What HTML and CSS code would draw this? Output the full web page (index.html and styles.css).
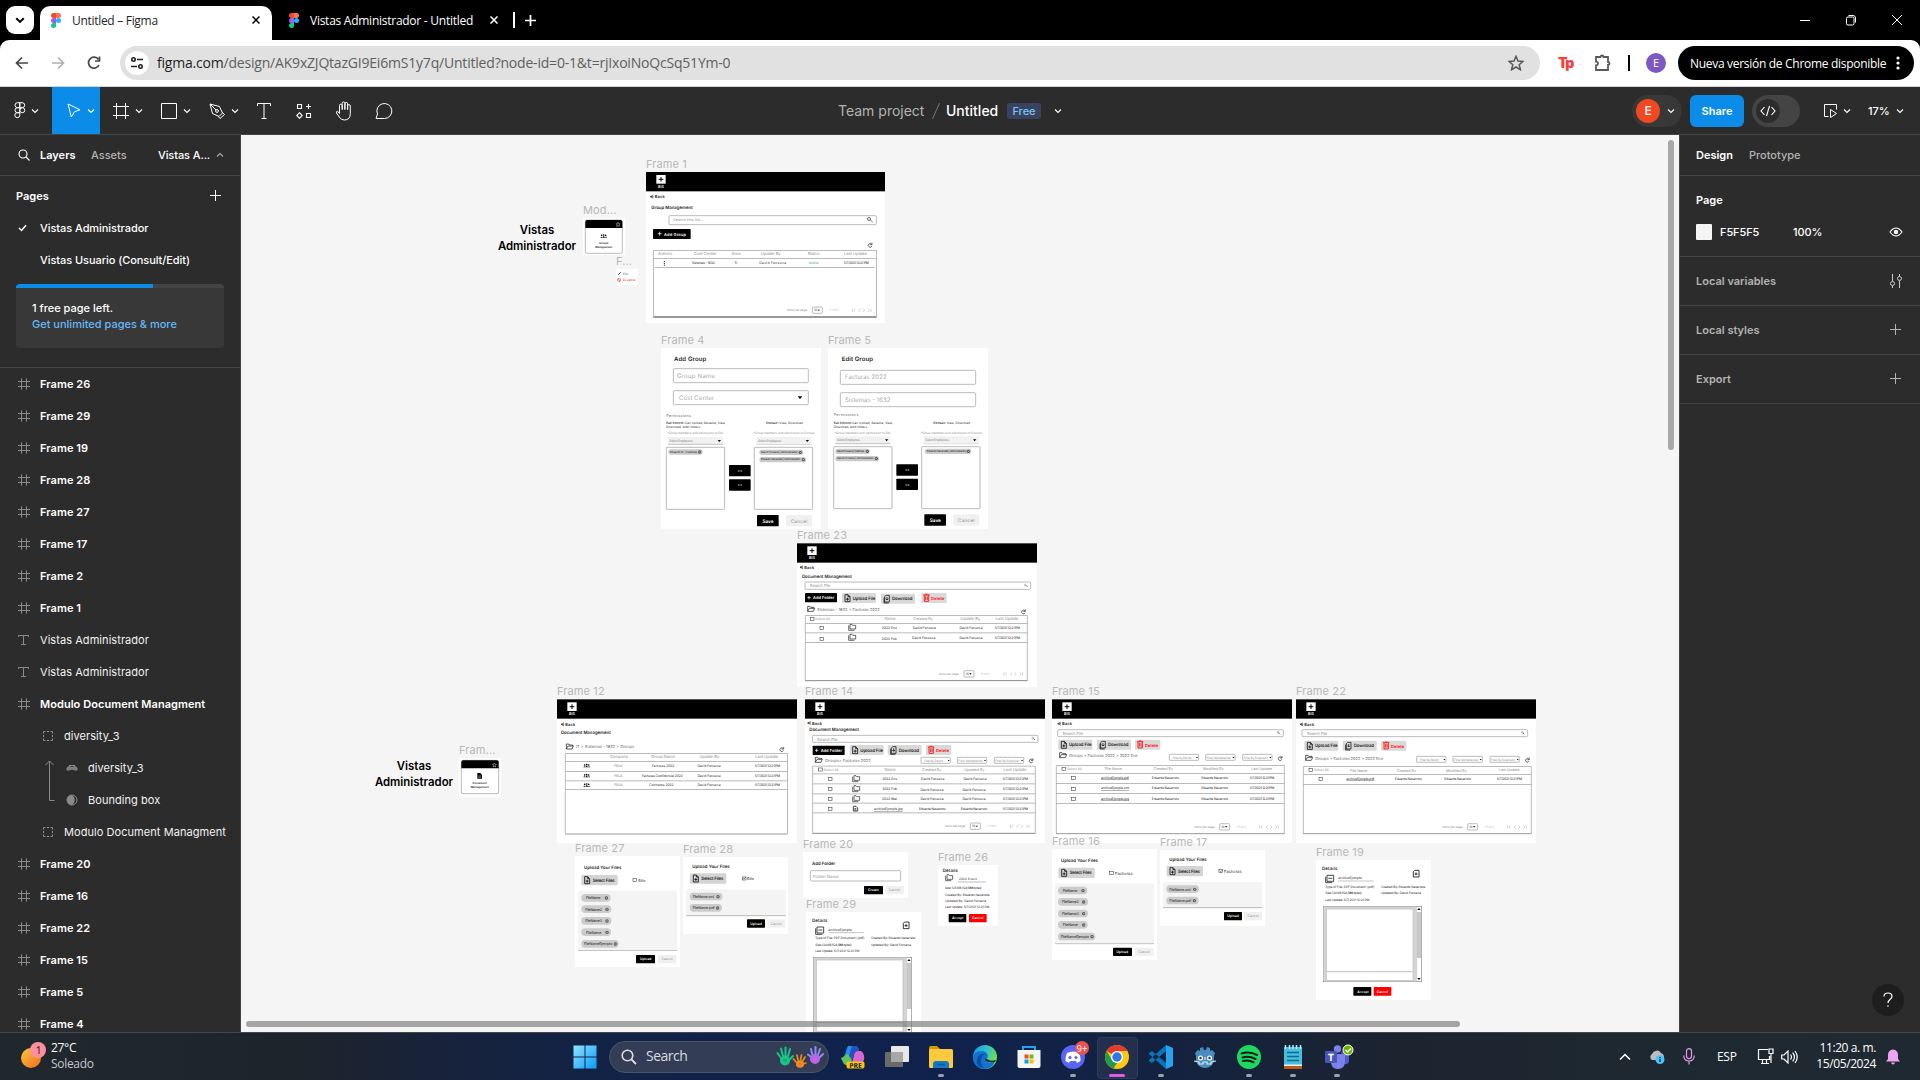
FILE: index.html
```html
<!DOCTYPE html>
<html lang="es">
<head>
<meta charset="utf-8">
<title>Untitled – Figma</title>
<link rel="stylesheet" href="styles.css">
</head>
<body>
<svg class="defs" aria-hidden="true">
  <defs>
    <symbol id="chev" viewBox="0 0 8 8"><path d="M1 2.5 4 5.5 7 2.5" fill="none" stroke="currentColor" stroke-width="1.1"/></symbol>
    <symbol id="plus" viewBox="0 0 12 12"><path d="M5.500 0v11M0 5.500h11" fill="none" stroke="currentColor"/></symbol>
    <symbol id="figma-logo" viewBox="0 0 10 15">
      <path d="M2.5 0H5v5H2.500a2.500 2.500 0 0 1 0-5z" fill="#f24e1e"/><path d="M5 0h2.500a2.500 2.500 0 0 1 0 5H5z" fill="#ff7262"/>
      <path d="M2.500 5H5v5H2.500a2.500 2.500 0 0 1 0-5z" fill="#a259ff"/><circle cx="7.500" cy="7.500" r="2.500" fill="#1abcfe"/>
      <path d="M2.500 10H5v2.500A2.500 2.500 0 1 1 2.500 10z" fill="#0acf83"/>
    </symbol>
    <symbol id="hash" viewBox="0 0 12 12"><path d="M3.500.5v11M8.500.5v11M0 3.500h12M0 8.500h12" fill="none" stroke="currentColor"/></symbol>
    <symbol id="tee" viewBox="0 0 12 12"><path d="M.5 3V1.500h10V3M5.500 1.500v9.500M3 10.500h5" fill="none" stroke="currentColor"/></symbol>
    <symbol id="group" viewBox="0 0 12 12"><path d="M1.500 3.500v-2h2M5 1.500h2M8.500 1.500h2v2M10.500 5v2M10.500 8.500v2h-2M7 10.500H5M3.500 10.500h-2v-2M1.500 7V5" fill="none" stroke="currentColor"/></symbol>

    <g id="scr-head">
      <rect width="720" height="58"/>
      <rect x="31" y="9" width="28" height="26" fill="#fff"/>
      <path d="M45 15v14M38 22h14" stroke="#000" stroke-width="3"/>
      <text x="45" y="44" class="c w b" font-size="11">BIS</text>
    </g>
    <g id="back"><path d="M11-4.500 2 0l9 4.500M2 0h10" fill="none" stroke="#222" stroke-width="2"/><text x="15" y="0" class="b" font-size="12" textLength="30">Back</text></g>
    <g id="refresh"><path d="M5-2A5.500 5.500 0 1 0 5.500 3M6-7v6H0" fill="none" stroke="#222" stroke-width="2"/></g>
    <g id="pager">
      <text x="0" y="0" class="g" font-size="9" textLength="62">Items per page:</text>
      <rect x="76" y="-10" width="30" height="19" rx="3" class="ln"/>
      <text x="81" y="0" font-size="9">10</text><path d="M92-2h7l-3.500 4z"/>
      <text x="127" y="0" class="l" font-size="9" textLength="27">1-1 of 1</text>
      <path d="M196-5V5M205-5l-5 5 5 5M220-5l-5 5 5 5M228-5l5 5-5 5M243-5l5 5-5 5M252-5V5" fill="none" stroke="#bbb" stroke-width="1.800"/>
    </g>
    <g id="file-add"><path d="M2 1h9l6 6v15H2zM11 1v6h6M9.500 10v9M5 14.500h9" fill="none" stroke="#111" stroke-width="2.500"/></g>
    <g id="folder"><path d="M1 16V1h7l2 3h10v3M1 16 6 7h16l-4 9z" fill="none" stroke="#222" stroke-width="2.200"/></g>
    <g id="folders"><path d="M5 1h6l2 3h9v11H5zM1 4v15h17" fill="none" stroke="#333" stroke-width="2.200"/></g>
    <g id="upload-btn"><rect width="102" height="30" rx="3" fill="#d9d9d9"/><use href="#file-add" x="7" y="4"/><text x="32" y="16" class="b" font-size="13" textLength="68">Upload File</text></g>
    <g id="down-btn"><rect width="102" height="30" rx="3" fill="#d9d9d9"/><path d="M15 5h10v20H11V9zM9 12v16h14M18 10v9M14 15l4 4 4-4" fill="none" stroke="#111" stroke-width="2.300"/><text x="33" y="16" class="b" font-size="13" textLength="61">Download</text></g>
    <g id="del-btn"><rect width="76" height="30" rx="3" fill="#d9d9d9"/><path d="M6 6h19M12 4h7M9 6v19h13V6M13 10v11M18 10v11" fill="none" stroke="#f00" stroke-width="2.500"/><text x="30" y="16" class="r b" font-size="12" textLength="39">Delete</text></g>
    <g id="add-btn"><rect width="96" height="28" rx="2"/><path d="M12 9v10M7 14h10" stroke="#fff" stroke-width="2.200"/><text x="24" y="14" class="w b" font-size="12" textLength="64">Add Folder</text></g>
    <rect id="box" x="-5" y="-5" width="11" height="9" fill="none" stroke="#444" stroke-width="1.800"/>
    <g id="x"><circle r="5" fill="#555"/><path d="M-2-2l4 4M2-2l-4 4" stroke="#ddd" stroke-width="1.500"/></g>
    <g id="people"><circle cx="-6" cy="-3" r="2.500"/><circle cy="-4" r="2.500"/><circle cx="6" cy="-3" r="2.500"/><path d="M-10 4q3-6 6 0zM-4 4q4-8 8 0zM4 4q3-6 6 0z"/></g>
    <g id="select-btn"><rect width="109" height="31" rx="4" fill="#d4d4d4"/><use href="#file-add" x="8" y="4"/><text x="34" y="16" class="b" font-size="13" textLength="66">Select Files</text></g>
    <g id="chips5">
      <rect width="88" height="23" rx="11" class="chip"/><text x="14" y="12" font-size="11" textLength="44">FileName</text><use href="#x" x="75" y="12"/>
      <rect y="34" width="90" height="23" rx="11" class="chip"/><text x="12" y="46" font-size="11" textLength="50">FileName2</text><use href="#x" x="77" y="46"/>
      <rect y="69" width="90" height="23" rx="11" class="chip"/><text x="12" y="81" font-size="11" textLength="50">FileName3</text><use href="#x" x="77" y="81"/>
      <rect y="103" width="89" height="23" rx="11" class="chip"/><text x="14" y="115" font-size="11" textLength="46">FileName</text><use href="#x" x="77" y="115"/>
      <rect y="138" width="112" height="23" rx="11" class="chip"/><text x="8" y="150" font-size="11" textLength="85">FileNameEjemplo</text><use href="#x" x="102" y="150"/>
    </g>
    <g id="chips2">
      <rect width="98" height="23" rx="11" class="chip"/><text x="9" y="12" font-size="11" textLength="64">FileName.xml</text><use href="#x" x="85" y="12"/>
      <rect y="34" width="97" height="23" rx="11" class="chip"/><text x="9" y="46" font-size="11" textLength="66">FileName.pdf</text><use href="#x" x="84" y="46"/>
    </g>
    <g id="filters">
      <rect width="88" height="18" rx="2" class="ln"/><text x="10" y="10" class="g" font-size="9" textLength="56">Filter by Period</text><path d="M80 8h6l-3 4z"/>
      <rect x="109" width="88" height="18" rx="2" class="ln"/><text x="112" y="10" class="g" font-size="9" textLength="72">Filter Alphabetical</text><path d="M189 8h6l-3 4z"/>
      <rect x="220" width="88" height="18" rx="2" class="ln"/><text x="223" y="10" class="g" font-size="9" textLength="72">Filter By Extension</text><path d="M300 8h6l-3 4z"/>
    </g>
    <g id="preview-win">
      <rect x="1" y="1" width="295" height="226" fill="#fff" stroke="#888" stroke-width="2"/>
      <path d="M2 2h278v224H2zM11 9v214h259V9z" fill="#d4d4d4" fill-rule="evenodd"/><rect x="11" y="9" width="259" height="214" fill="#fff" stroke="#bbb" stroke-width="2"/>
      <path d="M11 197h259" stroke="#ccc" stroke-width="4"/>
      <rect x="282" y="18" width="12" height="138" fill="#c8c8c8"/><path d="M283 12h10l-5-6zM283 216h10l-5 6z"/><path d="M281 0v226" stroke="#bbb" stroke-width="2"/>
    </g>
    <g id="doc-info">
      <text x="18" y="25" class="b" font-size="13" textLength="46">Details</text>
      <path d="M33 45h20v18H33zM29 49v18h20M37 54h12" fill="none" stroke="#222" stroke-width="2.500"/>
      <text x="67" y="54" font-size="10" textLength="70">archivoEjemplo</text><path d="M67 62h106" stroke="#888" stroke-width="1.500"/>
      <path d="M296 30h13v20h-17V34zM300 36v9M296 41h9" fill="none" stroke="#111" stroke-width="2.500"/>
      <text x="28" y="79" font-size="9.500" textLength="147">Type of File: PDF Document (.pdf)</text>
      <text x="28" y="99" font-size="9.500" textLength="109">Size: 124 KB (124,588 bytes)</text>
      <text x="28" y="118" font-size="9.500" textLength="132">Last Update: 5/7/2021 12:21 PM</text>
      <text x="195" y="79" font-size="9.500" textLength="133">Created By: Eduardo Navarrete</text>
      <text x="195" y="99" font-size="9.500" textLength="120">Updated By: David Fonseca</text>
    </g>
    <g id="perm">
      <text x="0" y="0" class="m" font-size="11" textLength="74">Permissions</text>
      <text x="0" y="23" class="b" font-size="9" textLength="54">Full Control:</text><text x="56" y="23" font-size="9" textLength="122">Can Upload, Rename, View,</text>
      <text x="0" y="36" font-size="9" textLength="103">Download, Add folders.</text>
      <text x="299" y="23" class="b" font-size="9" textLength="37">Consult:</text><text x="339" y="23" font-size="9" textLength="73">View, Download.</text>
      <text x="3" y="53" class="g" font-size="9" textLength="168">*Group members with permission to Edit</text>
      <text x="261" y="53" class="g" font-size="9" textLength="184">*Group members with permission to Consult</text>
      <rect x="5" y="64" width="165" height="22" fill="#f1f1f1"/><path d="M5 86h165M270 86h165" stroke="#aaa" stroke-width="2"/>
      <rect x="270" y="64" width="165" height="22" fill="#f1f1f1"/>
      <text x="9" y="75" class="g" font-size="10" textLength="70">Select Employees</text><text x="275" y="75" class="g" font-size="10" textLength="70">Select Employees</text>
      <path d="M154 73h10l-5 6zM418 73h10l-5 6z"/>
      <rect x="0" y="95" width="175" height="186" rx="2" class="ln"/><rect x="264" y="95" width="175" height="186" rx="2" class="ln"/>
      <rect x="188" y="148" width="65" height="34" rx="2"/><rect x="188" y="191" width="65" height="34" rx="2"/>
      <text x="221" y="165" class="c w" font-size="11">&gt;&gt;</text><text x="221" y="208" class="c w" font-size="11">&lt;&lt;</text>
      <rect x="272" y="298" width="65" height="34" rx="2"/><text x="305" y="316" class="c w b" font-size="14">Save</text>
      <rect x="359" y="298" width="78" height="34" fill="#f0f0f0"/><text x="398" y="316" class="c g" font-size="14" textLength="50">Cancel</text>
    </g>
  </defs>
</svg>

<div class="desktop">
  <header class="tabs">
    <button class="tab-search"><svg width="12" height="12" viewBox="0 0 8 8"><path d="M1.500 2.800 4 5.300 6.500 2.800" fill="none" stroke="#000" stroke-width="1.300"/></svg></button>
    <div class="tab tab-on"><svg width="10" height="15"><use href="#figma-logo"/></svg><span class="tt1">Untitled – Figma</span><svg class="tx" width="8" height="8"><path d="M.5.5l7 7M7.500.5l-7 7" stroke="#000" stroke-width="1.500"/></svg></div>
    <div class="tab tab-off"><svg width="10" height="15"><use href="#figma-logo"/></svg><span class="tt2">Vistas Administrador - Untitled</span><svg class="tx" width="8" height="8"><path d="M.5.5l7 7M7.500.5l-7 7" stroke="#fff" stroke-width="1.500"/></svg></div>
    <i class="tab-bar"></i>
    <svg class="newtab" width="11" height="11"><path d="M5.500 0v11M0 5.500h11" stroke="#fff" stroke-width="1.700"/></svg>
    <div class="winctl">
      <svg width="10" height="12"><path d="M0 6.500h10" stroke="#fff"/></svg>
      <svg width="10" height="12"><path d="M.5 4.500a1.500 1.500 0 0 1 1.500-1.500h4.500a1.500 1.500 0 0 1 1.500 1.500v5a1.500 1.500 0 0 1-1.500 1.500H2A1.500 1.500 0 0 1 .5 9.500zM2.500 1.500h4.500a2.500 2.500 0 0 1 2.500 2.500v4.500" fill="none" stroke="#fff"/></svg>
      <svg width="10" height="12"><path d="M0 1l10 10M10 1 0 11" stroke="#fff"/></svg>
    </div>
  </header>

  <div class="urlbar">
    <svg class="nav" width="14" height="14"><path d="M13 7H2M7 1.500 1.500 7 7 12.500" fill="none" stroke="#474747" stroke-width="1.700"/></svg>
    <svg class="nav" width="14" height="14"><path d="M1 7h11M7 1.500 12.500 7 7 12.500" fill="none" stroke="#b0b0b0" stroke-width="1.700"/></svg>
    <svg class="nav" width="14" height="14"><path d="M12 9A5.500 5.500 0 1 1 11.500 3.500M12.500.5V5H8" fill="none" stroke="#474747" stroke-width="1.700"/></svg>
    <div class="omni">
      <span class="site"><svg width="14" height="14"><g fill="none" stroke="#222" stroke-width="1.600"><circle cx="3.500" cy="3.500" r="1.700"/><path d="M7 3.500h6M1 10.500h6"/><circle cx="10.500" cy="10.500" r="1.700"/></g></svg></span>
      <span class="url"><b>figma.com</b>/design/AK9xZJQtazGI9Ei6mS1y7q/Untitled?node-id=0-1&amp;t=rjIxoiNoQcSq51Ym-0</span>
      <svg class="star" width="16" height="16"><path d="M8 1.300l2 4.700 5 .4-3.800 3.300 1.200 5L8 12l-4.400 2.700 1.200-5L1 6.400 6 6z" fill="none" stroke="#5a5a5a" stroke-width="1.500"/></svg>
    </div>
    <span class="tp">T<b>p</b></span>
    <svg class="puzzle" width="18" height="18"><path d="M2 3h4.500a1.500 1.500 0 0 1 3 0H14v5a1.500 1.500 0 0 1 0 3v5H2v-4.500a2 2 0 0 0 0-4z" fill="none" stroke="#5a5a5a" stroke-width="1.800"/></svg>
    <i class="sep"></i>
    <span class="profile">E</span>
    <div class="update"><span>Nueva versión de Chrome disponible</span><svg width="4" height="16"><g fill="#fff"><circle cx="2" cy="3" r="1.600"/><circle cx="2" cy="8" r="1.600"/><circle cx="2" cy="13" r="1.600"/></g></svg></div>
  </div>

  <div class="toolbar">
    <div class="tool menu"><svg width="12" height="17"><path d="M3.500.7h2.300v5H3.500a2.500 2.500 0 0 1 0-5zM5.800.7h2.400a2.500 2.500 0 0 1 0 5H5.800zM3.500 5.700h2.300v5H3.500a2.500 2.500 0 0 1 0-5zM3.500 10.700h2.300v2.600a2.500 2.500 0 1 1-2.300-2.600z" fill="none" stroke="#fff"/><circle cx="8.300" cy="8.200" r="2.500" fill="none" stroke="#fff"/></svg><svg class="cv"><use href="#chev"/></svg></div>
    <div class="tool on"><svg width="14" height="15"><path d="M1 1l12 5.800-5.500 1.900L4.300 14z" fill="none" stroke="#fff"/></svg><svg class="cv"><use href="#chev"/></svg></div>
    <div class="tool"><svg width="16" height="16"><path d="M3.500 0v16M12.500 0v16M0 3.500h16M0 12.500h16" stroke="#fff"/></svg><svg class="cv"><use href="#chev"/></svg></div>
    <div class="tool"><svg width="16" height="16"><path d="M.5.5h15v15H.5z" fill="none" stroke="#fff"/></svg><svg class="cv"><use href="#chev"/></svg></div>
    <div class="tool"><svg width="16" height="16"><path d="M1 1l9.500 2.500 3 6.500-3.500 3.500L3.500 10.500zM1 1l6 6M13.500 9.500l2 2-4.500 4-1.500-2" fill="none" stroke="#fff"/><circle cx="8" cy="8" r="1.400" fill="none" stroke="#fff"/></svg><svg class="cv"><use href="#chev"/></svg></div>
    <div class="tool solo"><svg width="14" height="16"><path d="M.5 3V.5h13V3M7 .5v15M4.500 15.500h5" fill="none" stroke="#fff"/></svg></div>
    <div class="tool solo"><svg width="16" height="16"><path d="M1.500 1.500h4v4h-4zM10.500 10.500h4v4h-4zM12.500 1v5M10 3.500h5M3.500 9.700l2.700 2.800-2.700 2.800L.8 12.500z" fill="none" stroke="#fff" stroke-width="1.100"/></svg></div>
    <div class="tool solo"><svg width="18" height="20"><path d="M4.500 12.500V4.500a1.300 1.300 0 0 1 2.700 0V9M7.200 8V2.300a1.300 1.300 0 0 1 2.700 0V9M9.900 8V2.800a1.300 1.300 0 0 1 2.700 0V9M12.600 8V5a1.300 1.300 0 0 1 2.700 0v7.500q0 6.500-6 6.500-3.500 0-5-3L1.500 12q-.7-1.500 1-1.800l2 2.300" fill="none" stroke="#fff"/></svg></div>
    <div class="tool solo"><svg width="18" height="18"><path d="M1 16.500l1.500-4.500a7.500 7.500 0 1 1 7 4.500z" fill="none" stroke="#fff"/></svg></div>
    <div class="crumb"><span class="team">Team project</span><svg width="8" height="16"><path d="M7.500 0 .5 16" stroke="#777"/></svg><span class="file">Untitled</span><span class="free">Free</span><svg class="cv"><use href="#chev"/></svg></div>
    <div class="actions">
      <div class="who"><span>E</span><svg class="cv"><use href="#chev"/></svg></div>
      <button class="share">Share</button>
      <div class="devmode"><span><svg width="16" height="12"><path d="M4.500 2 1 6l3.500 4M11.500 2 15 6l-3.500 4M9.500 1l-3 10" fill="none" stroke="#fff" stroke-width="1.100"/></svg></span></div>
      <svg class="present" width="14" height="14"><path d="M4.500 12.500h-4V.5h12v5M6.500 5.500v8l6-4z" fill="none" stroke="#fff"/></svg><svg class="cv"><use href="#chev"/></svg>
      <span class="zoom">17%</span><svg class="cv"><use href="#chev"/></svg>
    </div>
  </div>

  <main class="work">
    <aside class="left">
      <div class="ltabs"><svg width="12" height="12"><circle cx="5" cy="5" r="4" fill="none" stroke="#fff" stroke-width="1.100"/><path d="M8 8l3.500 3.500" stroke="#fff" stroke-width="1.100"/></svg><b>Layers</b><span class="assets">Assets</span><span class="pg">Vistas A...</span><svg class="cv up"><use href="#chev"/></svg></div>
      <section class="pages">
        <div class="ptitle"><b>Pages</b><svg width="12" height="12"><use href="#plus"/></svg></div>
        <div class="page"><svg width="9" height="8"><path d="M1 4l2.500 2.500L8 1.200" fill="none" stroke="#fff" stroke-width="1.500"/></svg><span>Vistas Administrador</span></div>
        <div class="page"><span>Vistas Usuario (Consult/Edit)</span></div>
        <div class="quota"><i></i><p>1 free page left.</p><a>Get unlimited pages &amp; more</a></div>
      </section>
      <ul class="layers">
        <li class="top"><svg><use href="#hash"/></svg>Frame 26</li>
        <li class="top"><svg><use href="#hash"/></svg>Frame 29</li>
        <li class="top"><svg><use href="#hash"/></svg>Frame 19</li>
        <li class="top"><svg><use href="#hash"/></svg>Frame 28</li>
        <li class="top"><svg><use href="#hash"/></svg>Frame 27</li>
        <li class="top"><svg><use href="#hash"/></svg>Frame 17</li>
        <li class="top"><svg><use href="#hash"/></svg>Frame 2</li>
        <li class="top"><svg><use href="#hash"/></svg>Frame 1</li>
        <li><svg><use href="#tee"/></svg>Vistas Administrador</li>
        <li><svg><use href="#tee"/></svg>Vistas Administrador</li>
        <li class="top"><svg><use href="#hash"/></svg>Modulo Document Managment</li>
        <li class="in1"><svg><use href="#group"/></svg>diversity_3</li>
        <li class="in2"><svg viewBox="0 0 12 12"><path d="M1 8V6l2-1.500 3 1 3-1L11 6v2H9L6 7 3 8zM3 3.500h6" fill="#777" stroke="#8a8a8a"/></svg>diversity_3</li>
        <li class="in2 mask"><svg viewBox="0 0 12 12"><circle cx="6" cy="6" r="5" fill="none" stroke="#8a8a8a"/><path d="M6 1a5 5 0 0 0 0 10 6 6 0 0 0 0-10z" fill="#8a8a8a"/></svg>Bounding box<svg class="clip" width="10" height="42" viewBox="0 0 10 42"><path d="M9.500 40.500H4.500V1M.5 5l4-4 4 4" fill="none" stroke="#8a8a8a"/></svg></li>
        <li class="in1"><svg><use href="#group"/></svg>Modulo Document Managment</li>
        <li class="top"><svg><use href="#hash"/></svg>Frame 20</li>
        <li class="top"><svg><use href="#hash"/></svg>Frame 16</li>
        <li class="top"><svg><use href="#hash"/></svg>Frame 22</li>
        <li class="top"><svg><use href="#hash"/></svg>Frame 15</li>
        <li class="top"><svg><use href="#hash"/></svg>Frame 5</li>
        <li class="top"><svg><use href="#hash"/></svg>Frame 4</li>
      </ul>
    </aside>

    <div class="canvas">
      <p class="note n1">Vistas<br>Administrador</p>
      <p class="note n2">Vistas<br>Administrador</p>

      <figure class="fr mod"><figcaption>Mod...</figcaption><svg viewBox="309 204 126 111">
        <rect x="316" y="210" width="111" height="100" rx="5" class="ln"/><path d="M316 234v-18q0-6 6-6h99q6 0 6 6v18z"/><path d="M414 217l2 4 4 .5-3 3 1 4.500-4-2-4 2 1-4.500-3-3 4-.5z" fill="none" stroke="#fff" stroke-width="1.300"/>
        <use href="#people" x="371" y="259"/><text x="371" y="279" class="c b" font-size="8">Groups</text><text x="371" y="290" class="c b" font-size="8">Management</text></svg></figure>

      <figure class="fr f2"><figcaption>F...</figcaption><svg viewBox="408 357 66 48"><path d="M415 374l7-7" stroke="#333" stroke-width="3"/><text x="429" y="371" class="m" font-size="9">Edit</text><g stroke="#f33" stroke-width="1.800" fill="none"><circle cx="417" cy="390" r="4.500"/><path d="M414 387l6 6"/></g><text x="429" y="391" class="r" font-size="9" textLength="37">Disable</text></svg></figure>

      <figure class="fr f1"><figcaption>Frame 1</figcaption><svg viewBox="498 66 717 453">
        <use href="#scr-head" x="498" y="66"/><use href="#back" x="509" y="140"/>
        <text x="514" y="172" class="b" font-size="13" textLength="124">Group Management</text>
        <rect x="567" y="197" width="622" height="27" rx="3" class="ln"/><text x="580" y="209" class="g" font-size="11" textLength="90">Search this list...</text>
        <g fill="none" stroke="#222" stroke-width="2"><circle cx="1167" cy="207" r="4.500"/><path d="M1171 210l7 6"/></g>
        <rect x="519" y="237" width="113" height="30" rx="2"/><path d="M539 245v12M533 251h12" stroke="#fff" stroke-width="2.200"/><text x="552" y="253" class="w b" font-size="12" textLength="66">Add Group</text>
        <use href="#refresh" x="1170" y="285"/>
        <path d="M520.500 500V301.500h669V500" class="ln"/><path d="M520 501h670" stroke="#777" stroke-width="4"/><path d="M520 325.500h670M524 352.500h660" class="ln"/>
        <g class="g c" font-size="12"><text x="555" y="311">Actions</text><text x="675" y="311">Cost Center</text><text x="768" y="310">Area</text><text x="872" y="311">Update By</text><text x="1001" y="311">Status</text><text x="1126" y="311">Last Update</text></g>
        <g class="c" font-size="10"><text x="670" y="339" textLength="68">Sistemas - 1632</text><text x="767" y="339">TI</text><text x="878" y="339" textLength="80">David Fonseca</text><text x="1001" y="339" class="ok" textLength="30">Active</text><text x="1129" y="340" textLength="75">5/7/2021 12:21 PM</text></g>
        <path d="M553 333v14" stroke="#000" stroke-width="3" stroke-dasharray="3 2.500"/>
        <use href="#pager" x="921" y="481"/></svg></figure>

      <figure class="fr f4"><figcaption>Frame 4</figcaption><svg viewBox="543 594 480 543">
        <text x="582" y="626" class="b" font-size="18" textLength="97">Add Group</text>
        <rect x="580" y="656" width="405" height="42" rx="3" class="ln"/><text x="591" y="677" class="lt" font-size="18" textLength="114">Group Name</text>
        <rect x="580" y="722" width="405" height="42" rx="3" class="ln"/><text x="597" y="743" class="lt" font-size="18" textLength="105">Cost Center</text><path d="M953 739h14l-7 8z"/>
        <use href="#perm" x="559" y="797"/>
        <rect x="565" y="898" width="103" height="16" rx="8" class="chip"/><text x="570" y="906" font-size="8.500" textLength="82">Eduardo N. | Sistemas</text><use href="#x" x="659" y="906"/>
        <rect x="838" y="899" width="132" height="16" rx="8" class="chip"/><text x="843" y="907" font-size="8.500" textLength="110">David Fonseca | Administrador</text><use href="#x" x="961" y="907"/>
        <rect x="838" y="921" width="140" height="16" rx="8" class="chip"/><text x="843" y="929" font-size="8.500" textLength="118">Eduardo Navarrete | Administrador</text><use href="#x" x="970" y="929"/></svg></figure>

      <figure class="fr f5"><figcaption>Frame 5</figcaption><svg viewBox="1044 594 480 543">
        <text x="1085" y="626" class="b" font-size="18" textLength="94">Edit Group</text>
        <rect x="1081" y="661" width="406" height="42" rx="3" class="ln"/><text x="1095" y="682" class="lt" font-size="18" textLength="125">Facturas 2022</text>
        <rect x="1081" y="728" width="406" height="42" rx="3" class="ln"/><text x="1095" y="749" class="lt" font-size="18" textLength="136">Sistemas - 1632</text>
        <use href="#perm" x="1061" y="795"/>
        <rect x="1066" y="896" width="103" height="16" rx="8" class="chip"/><text x="1071" y="904" font-size="8.500" textLength="82">David Fonseca | Sistemas</text><use href="#x" x="1162" y="904"/>
        <rect x="1066" y="918" width="131" height="16" rx="8" class="chip"/><text x="1071" y="926" font-size="8.500" textLength="110">David Fonseca | Administrador</text><use href="#x" x="1189" y="926"/>
        <rect x="1334" y="896" width="140" height="16" rx="8" class="chip"/><text x="1340" y="904" font-size="8.500" textLength="118">Eduardo Navarrete | Administrador</text><use href="#x" x="1465" y="904"/></svg></figure>

      <figure class="fr f23"><figcaption>Frame 23</figcaption><svg viewBox="51 69 720 432">
        <use href="#scr-head" x="51" y="70"/><use href="#back" x="58" y="142"/><text x="66" y="169" class="b" font-size="13" textLength="149">Document Management</text>
        <rect x="75" y="186" width="677" height="22" rx="3" class="ln"/><text x="90" y="197" class="g" font-size="12" textLength="61">Search File</text><path d="M743 201l-5-5" stroke="#222" stroke-width="2"/><circle cx="736" cy="195" r="2.500" class="ln"/>
        <use href="#add-btn" x="75" y="219"/><use href="#upload-btn" x="186" y="219"/><use href="#down-btn" x="303" y="221"/><use href="#del-btn" x="424" y="219"/>
        <use href="#folder" x="82" y="258"/><text x="112" y="267" class="m" font-size="12" textLength="187">Sistemas - 1632 &gt; Facturas 2022</text><use href="#refresh" x="730" y="275"/>
        <path d="M76 480V286.500h666V480M76 310.500h666M76 338.500h666M76 367.500h666" class="ln"/><path d="M75 482h668" stroke="#888" stroke-width="3"/>
        <use href="#box" x="96" y="298"/><text x="106" y="298" class="g" font-size="10">Select All</text>
        <g class="g c" font-size="12"><text x="330" y="296">Name</text><text x="429" y="296" font-size="11">Created By</text><text x="571" y="296">Update By</text><text x="681" y="296">Last Update</text></g>
        <use href="#box" x="125" y="325"/><use href="#box" x="125" y="357"/><use href="#folders" x="205" y="312"/><use href="#folders" x="205" y="342"/>
        <g class="c" font-size="10"><text x="328" y="325">2022 Ene</text><text x="433" y="324">David Fonseca</text><text x="573" y="324">David Fonseca</text><text x="682" y="324" textLength="76">5/7/2021 12:21 PM</text><text x="328" y="356">2022 Feb</text><text x="431" y="355">David Fonseca</text><text x="573" y="354">David Fonseca</text><text x="682" y="355" textLength="76">5/7/2021 12:21 PM</text></g>
        <use href="#pager" x="476" y="462"/></svg></figure>

      <figure class="fr f12"><figcaption>Frame 12</figcaption><svg viewBox="591 57 720 432">
        <use href="#scr-head" x="591" y="58"/><use href="#back" x="601" y="133"/><text x="603" y="159" class="b" font-size="13" textLength="149">Document Management</text>
        <use href="#folder" x="618" y="191"/><text x="648" y="200" class="m" font-size="12" textLength="174">IT &gt; Sistemas - 1632 &gt; Groups</text><use href="#refresh" x="1265" y="208"/>
        <path d="M616 460V220.500h666.500V460M616 244.500h666M616 274.500h666M616 302.500h666M616 328.500h666" class="ln"/><path d="M615 462h668" stroke="#999" stroke-width="3"/>
        <g class="g c" font-size="12"><text x="777" y="230">Company</text><text x="909" y="230">Group Name</text><text x="1048" y="230">Update By</text><text x="1220" y="230">Last Update</text></g>
        <use href="#people" x="680" y="258"/><use href="#people" x="680" y="288"/><use href="#people" x="680" y="316"/>
        <g class="c" font-size="10"><text x="775" y="257" class="c m">FELA</text><text x="909" y="257">Facturas 2022</text><text x="1047" y="257">David Fonseca</text><text x="1222" y="259" textLength="76">5/7/2021 12:21 PM</text><text x="775" y="287" class="c m">FELA</text><text x="907" y="287" textLength="122">Facturas Confidencial 2022</text><text x="1047" y="287">David Fonseca</text><text x="1222" y="289" textLength="76">5/7/2021 12:21 PM</text><text x="775" y="314" class="c m">FELA</text><text x="904" y="314">Contratos 2022</text><text x="1047" y="314">David Fonseca</text><text x="1222" y="315" textLength="76">5/7/2021 12:21 PM</text></g></svg></figure>

      <figure class="fr f14"><figcaption>Frame 14</figcaption><svg viewBox="75 537 720 432">
        <use href="#scr-head" x="75" y="538"/><use href="#back" x="81" y="609"/><text x="88" y="629" class="b" font-size="13" textLength="149">Document Management</text>
        <rect x="97" y="646" width="677" height="21" rx="3" class="ln"/><text x="112" y="657" class="g" font-size="12" textLength="61">Search File</text><path d="M765 660l-5-5" stroke="#222" stroke-width="2"/><circle cx="758" cy="654" r="2.500" class="ln"/>
        <use href="#add-btn" x="98" y="677"/><use href="#upload-btn" x="209" y="675"/><use href="#down-btn" x="323" y="675"/><use href="#del-btn" x="438" y="675"/>
        <use href="#folder" x="105" y="711"/><text x="135" y="720" class="m" font-size="12" textLength="137">Groups&gt; Facturas 2022</text><use href="#filters" x="423" y="712"/><use href="#refresh" x="753" y="722"/>
        <path d="M98 938V738.500h668V938M98 761.500h668M98 791.500h668M98 821.500h668M98 849.500h668M98 878.500h668" class="ln"/><path d="M97 940h670" stroke="#888" stroke-width="3"/>
        <use href="#box" x="121" y="749"/><text x="131" y="749" class="g" font-size="10">Select All</text>
        <g class="g c" font-size="12"><text x="330" y="747">Name</text><text x="455" y="748" font-size="11">Created By</text><text x="583" y="749" font-size="11">Updated By</text><text x="705" y="748">Last Update</text></g>
        <use href="#box" x="150" y="777"/><use href="#box" x="150" y="808"/><use href="#box" x="150" y="838"/><use href="#box" x="150" y="867"/>
        <use href="#folders" x="217" y="766"/><use href="#folders" x="217" y="796"/><use href="#folders" x="217" y="826"/><path d="M220 859h8l5 5v9h-13zM223 866h6M223 870h6" fill="none" stroke="#222" stroke-width="2.500"/>
        <g class="c" font-size="10"><text x="329" y="777">2022 Ene</text><text x="458" y="777">David Fonseca</text><text x="585" y="777">David Fonseca</text><text x="706" y="777" textLength="76">5/7/2021 12:21 PM</text><text x="329" y="808">2022 Feb</text><text x="456" y="809">David Fonseca</text><text x="582" y="809">David Fonseca</text><text x="706" y="808" textLength="76">5/7/2021 12:21 PM</text><text x="329" y="837">2022 Mar</text><text x="456" y="838">David Fonseca</text><text x="582" y="838">David Fonseca</text><text x="706" y="838" textLength="76">5/7/2021 12:21 PM</text><text x="325" y="867" textLength="86" text-decoration="underline">archivoEjemplo.jpg</text><text x="457" y="867" textLength="80">Eduardo Navarrete</text><text x="582" y="868" textLength="80">Eduardo Navarrete</text><text x="706" y="867" textLength="76">5/7/2021 12:21 PM</text></g>
        <use href="#pager" x="495" y="919"/></svg></figure>

      <figure class="fr f15"><figcaption>Frame 15</figcaption><svg viewBox="36 57 720 432">
        <use href="#scr-head" x="36" y="58"/><use href="#back" x="51" y="131"/>
        <rect x="53" y="149" width="677" height="21" rx="3" class="ln"/><text x="68" y="160" class="g" font-size="12" textLength="61">Search File</text><path d="M720 163l-5-5" stroke="#222" stroke-width="2"/><circle cx="714" cy="157" r="2.500" class="ln"/>
        <use href="#upload-btn" x="55" y="179"/><use href="#down-btn" x="171" y="179"/><use href="#del-btn" x="285" y="179"/>
        <use href="#folder" x="58" y="217"/><text x="87" y="227" class="m" font-size="12" textLength="206">Groups &gt; Facturas 2022 &gt; 2022 Ene</text><use href="#filters" x="388" y="223"/><use href="#refresh" x="720" y="235"/>
        <path d="M49 460V256.500h684V460M49 280.500h684M49 310.500h684M49 340.500h684M49 370.500h684" class="ln"/><path d="M48 461h686" stroke="#999" stroke-width="3"/>
        <use href="#box" x="71" y="267"/><text x="81" y="267" class="g" font-size="10">Select All</text>
        <g class="g c" font-size="11"><text x="220" y="267">File Name</text><text x="370" y="267">Created By</text><text x="520" y="267">Modified By</text><text x="665" y="266">Last Update</text></g>
        <use href="#box" x="100" y="295"/><use href="#box" x="100" y="327"/><use href="#box" x="100" y="357"/>
        <g class="c" font-size="10"><text x="225" y="293" textLength="84" text-decoration="underline">archivoEjemplo.pdf</text><text x="376" y="293" textLength="81">Eduardo Navarrete</text><text x="524" y="293" textLength="81">Eduardo Navarrete</text><text x="666" y="293" textLength="73">5/7/2021 12:21 PM</text><text x="225" y="325" textLength="84" text-decoration="underline">archivoEjemplo.xml</text><text x="376" y="325" textLength="81">Eduardo Navarrete</text><text x="524" y="325" textLength="81">Eduardo Navarrete</text><text x="666" y="325" textLength="73">5/7/2021 12:21 PM</text><text x="225" y="356" textLength="84" text-decoration="underline">archivoEjemplo.jpg</text><text x="376" y="356" textLength="81">Eduardo Navarrete</text><text x="524" y="356" textLength="81">Eduardo Navarrete</text><text x="666" y="356" textLength="73">5/7/2021 12:21 PM</text></g>
        <use href="#pager" x="463" y="441"/></svg></figure>

      <figure class="fr f22"><figcaption>Frame 22</figcaption><svg viewBox="768 57 720 432">
        <use href="#scr-head" x="768" y="58"/><use href="#back" x="778" y="133"/>
        <rect x="786" y="149" width="677" height="21" rx="3" class="ln"/><text x="801" y="160" class="g" font-size="12" textLength="61">Search File</text><path d="M1453 163l-5-5" stroke="#222" stroke-width="2"/><circle cx="1447" cy="157" r="2.500" class="ln"/>
        <use href="#upload-btn" x="793" y="182"/><use href="#down-btn" x="908" y="182"/><use href="#del-btn" x="1023" y="182"/>
        <use href="#folder" x="796" y="225"/><text x="825" y="234" class="m" font-size="12" textLength="204">Groups &gt; Facturas 2022 &gt; 2022 Ene</text><use href="#filters" x="1130" y="229"/><use href="#refresh" x="1462" y="240"/>
        <path d="M790 460V259.500h684V460M790 283.500h684M790 313.500h684" class="ln"/><path d="M789 461h686" stroke="#999" stroke-width="3"/>
        <use href="#box" x="812" y="271"/><text x="822" y="271" class="g" font-size="10">Select All</text>
        <g class="g c" font-size="11"><text x="956" y="271">File Name</text><text x="1099" y="271">Created By</text><text x="1249" y="271">Modified By</text><text x="1407" y="269">Last Update</text></g>
        <use href="#box" x="842" y="298"/>
        <g class="c" font-size="10"><text x="961" y="296" textLength="84" text-decoration="underline">archivoEjemplo.pdf</text><text x="1105" y="296" textLength="81">Eduardo Navarrete</text><text x="1253" y="296" textLength="81">Eduardo Navarrete</text><text x="1408" y="296" textLength="76">5/7/2021 12:21 PM</text></g>
        <use href="#pager" x="1207" y="441"/></svg></figure>

      <figure class="fr doc"><figcaption>Fram...</figcaption><svg viewBox="297 234 126 117">
        <rect x="304" y="241" width="112" height="100" rx="5" class="ln"/><path d="M304 265v-18q0-6 6-6h100q6 0 6 6v18z"/><path d="M403 249l2 4 4 .5-3 3 1 4.500-4-2-4 2 1-4.500-3-3 4-.5z" fill="none" stroke="#fff" stroke-width="1.300"/>
        <path d="M352 279h9l5 5v12h-14z"/><path d="M355 288h8M355 292h8" stroke="#fff" stroke-width="1.300"/><text x="359" y="311" class="c b" font-size="8.500">Document</text><text x="359" y="322" class="c b" font-size="8.500">Management</text></svg></figure>

      <figure class="fr f27"><figcaption>Frame 27</figcaption><svg viewBox="645 528 315 333">
        <text x="672" y="564" class="b" font-size="13" textLength="112">Upload Your Files</text><use href="#select-btn" x="664" y="585"/><use href="#box" x="824" y="601"/><text x="835" y="601" font-size="11">Bills</text>
        <rect x="654" y="632" width="297" height="179" fill="#f4f4f4"/><path d="M654 811.500h297" stroke="#aaa" stroke-width="2"/><use href="#chips5" x="664" y="642"/>
        <rect x="828" y="825" width="57" height="25" rx="2"/><text x="857" y="838" class="c w b" font-size="10">Upload</text><rect x="894" y="825" width="55" height="25" fill="#f0f0f0"/><text x="921" y="838" class="c g" font-size="10">Cancel</text></svg></figure>

      <figure class="fr f28"><figcaption>Frame 28</figcaption><svg viewBox="969 531 315 231">
        <text x="997" y="560" class="b" font-size="13" textLength="112">Upload Your Files</text><use href="#select-btn" x="990" y="580"/><use href="#box" x="1152" y="596"/><path d="M1149 595l3 2 5-5" fill="none" stroke="#222" stroke-width="1.500"/><text x="1161" y="597" font-size="11">Bills</text>
        <rect x="979" y="628" width="298" height="79" fill="#f4f4f4"/><path d="M979 707h298" stroke="#999" stroke-width="2"/><use href="#chips2" x="989" y="638"/>
        <rect x="1161" y="718" width="54" height="25" rx="2"/><text x="1188" y="731" class="c w b" font-size="10">Upload</text><rect x="1222" y="718" width="53" height="25" fill="#f0f0f0"/><text x="1248" y="731" class="c g" font-size="10">Cancel</text></svg></figure>

      <figure class="fr f16"><figcaption>Frame 16</figcaption><svg viewBox="36 507 315 333">
        <text x="63" y="543" class="b" font-size="13" textLength="111">Upload Your Files</text><use href="#select-btn" x="55" y="563"/><use href="#box" x="214" y="579"/><text x="225" y="579" font-size="12" textLength="53">Facturas</text>
        <rect x="45" y="611" width="297" height="180" fill="#f4f4f4"/><path d="M45 791h297" stroke="#aaa" stroke-width="2"/><use href="#chips5" x="54" y="620"/>
        <rect x="219" y="803" width="57" height="25" rx="2"/><text x="247" y="816" class="c w b" font-size="10">Upload</text><rect x="285" y="803" width="55" height="25" fill="#f0f0f0"/><text x="312" y="816" class="c g" font-size="10">Cancel</text></svg></figure>

      <figure class="fr f17"><figcaption>Frame 17</figcaption><svg viewBox="360 510 315 228">
        <text x="388" y="538" class="b" font-size="13" textLength="112">Upload Your Files</text><use href="#select-btn" x="380" y="558"/><use href="#box" x="542" y="574"/><path d="M539 573l3 2 5-5" fill="none" stroke="#222" stroke-width="1.500"/><text x="552" y="574" font-size="12" textLength="53">Facturas</text>
        <rect x="369" y="606" width="298" height="77" fill="#f4f4f4"/><path d="M369 683h298" stroke="#999" stroke-width="2"/><use href="#chips2" x="379" y="616"/>
        <rect x="552" y="696" width="54" height="25" rx="2"/><text x="579" y="709" class="c w b" font-size="10">Upload</text><rect x="612" y="696" width="54" height="25" fill="#f0f0f0"/><text x="639" y="709" class="c g" font-size="10">Cancel</text></svg></figure>

      <figure class="fr f20"><figcaption>Frame 20</figcaption><svg viewBox="69 66 315 138">
        <text x="96" y="101" class="b" font-size="13" textLength="70">Add Folder</text><rect x="91" y="122" width="271" height="31" rx="3" class="ln"/><text x="99" y="138" class="g" font-size="12" textLength="77">Folder Name</text>
        <rect x="252" y="168" width="57" height="25" rx="2"/><text x="280" y="181" class="c w b" font-size="10">Create</text><rect x="317" y="168" width="55" height="25" fill="#f0f0f0"/><text x="343" y="181" class="c g" font-size="10">Cancel</text></svg></figure>

      <figure class="fr f29"><figcaption>Frame 29</figcaption><svg viewBox="78 246 345 360"><use href="#doc-info" x="78" y="246"/><use href="#preview-win" x="99" y="381"/></svg></figure>

      <figure class="fr f19"><figcaption>Frame 19</figcaption><svg viewBox="828 540 345 420"><use href="#doc-info" x="828" y="541"/><use href="#preview-win" x="849" y="678"/>
        <rect x="940" y="921" width="54" height="26" rx="2"/><text x="969" y="935" class="c w b" font-size="10">Accept</text><rect x="1001" y="921" width="53" height="26" rx="2" fill="#f00"/><text x="1027" y="935" class="c w b" font-size="10">Cancel</text></svg></figure>

      <figure class="fr f26"><figcaption>Frame 26</figcaption><svg viewBox="474 105 180 183">
        <text x="488" y="122" class="b" font-size="13" textLength="46">Details</text><use href="#folders" x="496" y="133"/><text x="537" y="147" font-size="9" textLength="54">2022 Enero</text><path d="M533 156h84" stroke="#777" stroke-width="1.500"/>
        <g font-size="9.500"><text x="495" y="174" textLength="110">Size: 125 KB (124,588 bytes)</text><text x="495" y="194" textLength="134">Created By: Eduardo Navarrete</text><text x="495" y="214" textLength="123">Updated By: David Fonseca</text><text x="495" y="232" textLength="133">Last Update: 5/7/2021 12:21 PM</text></g>
        <rect x="506" y="252" width="53" height="25" rx="2"/><text x="533" y="265" class="c w b" font-size="10">Accept</text><rect x="567" y="252" width="53" height="25" rx="2" fill="#f00"/><text x="593" y="265" class="c w b" font-size="10">Cancel</text></svg></figure>

      <i class="vthumb"></i><i class="hthumb"></i>
    </div>

    <aside class="right">
      <div class="rtabs"><b>Design</b><span>Prototype</span></div>
      <section class="rpage"><b>Page</b><div class="color"><i></i><span class="hex">F5F5F5</span><span>100%</span><svg width="14" height="10"><path d="M1 5q6-8 12 0-6 8-12 0z" fill="none" stroke="#fff" stroke-width="1.100"/><circle cx="7" cy="5" r="2.200" fill="#fff"/></svg></div></section>
      <div class="rrow">Local variables<svg width="12" height="14"><path d="M2.500 0v7M2.500 12v2M9.500 0v2M9.500 7v7" stroke="#ccc"/><circle cx="2.500" cy="9.500" r="2" fill="none" stroke="#ccc"/><circle cx="9.500" cy="4.500" r="2" fill="none" stroke="#ccc"/></svg></div>
      <div class="rrow">Local styles<svg width="12" height="12"><use href="#plus"/></svg></div>
      <div class="rrow">Export<svg width="12" height="12"><use href="#plus"/></svg></div>
      <button class="help"><svg width="10" height="16"><path d="M1 4.500q0-3.500 4-3.500t4 3.500c0 2.700-4 3-4 6.500M5 13.300v1.400" fill="none" stroke="#fff" stroke-width="1.200"/></svg></button>
    </aside>
  </main>

  <footer class="taskbar">
    <div class="weather"><svg width="28" height="28"><defs><linearGradient id="sun" x2="1" y2="1"><stop stop-color="#f9c840"/><stop offset="1" stop-color="#f26a1b"/></linearGradient></defs><circle cx="11" cy="17" r="10" fill="url(#sun)"/><circle cx="18" cy="9" r="8" fill="#ff8f9c"/><text x="18.500" y="13" font-size="11" text-anchor="middle">1</text></svg><p>27°C<br><span>Soleado</span></p></div>
    <div class="apps">
      <svg class="win" width="24" height="24"><defs><linearGradient id="wg" x2="1" y2="1"><stop stop-color="#8fe4ff"/><stop offset="1" stop-color="#0a9cf8"/></linearGradient></defs><path d="M.5.5h11v11H.5zM12.500.5h11v11h-11zM.5 12.500h11v11H.5zM12.500 12.500h11v11h-11z" fill="url(#wg)"/></svg>
      <div class="search"><svg width="16" height="16"><circle cx="6.500" cy="6.500" r="5.300" fill="none" stroke="#ddd" stroke-width="1.600"/><path d="M10.500 10.500l4.500 4.500" stroke="#ddd" stroke-width="1.800"/></svg><span>Search</span>
        <svg class="hands" width="48" height="24"><g stroke-linecap="round" fill="none"><g stroke="#18c58a" stroke-width="2"><path d="M5 13 1.500 8M7 11 5 3.500M9.500 11V2.500M12 11l2-7M13 15l4-4"/><ellipse cx="9" cy="15.500" rx="3.500" ry="3.500" stroke-width="3" fill="#12b565"/></g><g stroke="#f08a1e" stroke-width="1.700"><path d="M20 17l-2.500-3M22 15l-1-5M24.500 15l1-5M26.500 16l2.500-4M27 19l3-1"/><ellipse cx="24" cy="19" rx="2.800" ry="2.500" stroke-width="2.500" fill="#f07a12"/></g><g stroke="#8a8cf0" stroke-width="2"><path d="M35 12l-3-2.500M36.500 10 35 4M39.500 10V2M42 10l2-6M43 13l4-4"/><ellipse cx="39" cy="14" rx="3.500" ry="3.500" stroke="#b566e6" stroke-width="3" fill="#d75ae0"/></g></g></svg></div>
      <div class="app"><svg width="24" height="24"><path d="M7 1h7q3 0 4 4l-5 3-3 9q-1 3-4 3-3 0-4-3L0 13q4-1 5-7 1-4 2-5z" fill="#1f8fe8"/><path d="M0 13q4-1 5-4l7 2-3 9H6q-3 0-4-3z" fill="#5fc45a"/><path d="M14 6h5q3 0 4 5 1 4-2 7l-3 2H8q3-1 4-6z" fill="#d868cf"/><path d="M11 1h3q3 0 4 5-4 0-5 3l-2 6-3-4z" fill="#2550c8"/><rect x="5.500" y="16.500" width="18" height="7" rx="2" fill="#fdc60a"/><text x="14.500" y="22.500" font-size="6.800" font-weight="700" text-anchor="middle">PRE</text></svg></div>
      <div class="app"><svg width="24" height="24"><rect y="7" width="18" height="15" rx="1" fill="#6a6a6a"/><rect x="6" y="1" width="18" height="16" rx="1" fill="#e8e8e8"/><path d="M6 7h12v10H6z" fill="#a8a8a8"/></svg></div>
      <div class="app run"><svg width="24" height="24"><path d="M0 3q0-2 2-2h6l3 3v4H0z" fill="#d99a00"/><rect y="4" width="24" height="19" rx="1.500" fill="#fcca3c"/><path d="M4 23v-4q0-3 3-3h10q3 0 3 3v4z" fill="#1478c8"/><path d="M8 19.500h8" stroke="#0a5aa0" stroke-width="1.500"/></svg></div>
      <div class="app"><svg width="24" height="24"><defs><linearGradient id="eg" x2="1" y2=".5"><stop stop-color="#1c8fe0"/><stop offset=".5" stop-color="#2fbfd0"/><stop offset="1" stop-color="#6fe04a"/></linearGradient></defs><circle cx="12" cy="12" r="12" fill="url(#eg)"/><path d="M0 12Q1 6 8 6q6 0 7 5c0 2-2 2-2 4s4 4 9 1q-3 8-10 8Q1 24 0 12z" fill="#1173cf"/><path d="M9 12q-3 6 2 11Q2 22 4 14q2-6 8-5-2 1-3 3z" fill="#0c4f9e"/><path d="M12 13q-1 5 10 4 .5-1 1-2-6 2-9-1z" fill="#13244b"/></svg></div>
      <div class="app"><svg width="24" height="24"><path d="M6 6V2h12v4" fill="none" stroke="#22a2ec" stroke-width="2"/><path d="M.5 5h23v16q0 2-2 2h-19q-2 0-2-2z" fill="#f4f4f4"/><path d="M7.500 9.500h4v4h-4z" fill="#f25022"/><path d="M12.500 9.500h4v4h-4z" fill="#7fba00"/><path d="M7.500 14.500h4v4h-4z" fill="#00a4ef"/><path d="M12.500 14.500h4v4h-4z" fill="#ffb900"/></svg></div>
      <div class="app run"><svg width="24" height="24"><circle cx="12" cy="12" r="12" fill="#5865f2"/><path d="M6 8q6-3 12 0 2 4 1.500 8L16 18l-1-2H9l-1 2-3.500-2Q4 12 6 8z" fill="#fff"/><circle cx="9" cy="12.500" r="1.600" fill="#5865f2"/><circle cx="15" cy="12.500" r="1.600" fill="#5865f2"/><circle cx="21" cy="3" r="7" fill="#f05050"/><text x="21" y="6.500" class="w" font-size="9.500" text-anchor="middle">9+</text></svg></div>
      <div class="app run cur"><svg width="24" height="24"><circle cx="12" cy="12" r="12" fill="#fbc816"/><path d="M12 12 1.600 6A12 12 0 0 1 22.400 6H12z" fill="#e33b2e"/><path d="M1.600 6 7 15l5 3-3.500 5.500A12 12 0 0 1 1.600 6z" fill="#229a48"/><circle cx="12" cy="12" r="6" fill="#fff"/><circle cx="12" cy="12" r="4.700" fill="#3279e8"/></svg></div>
      <div class="app run"><svg width="24" height="24"><path d="M17 0 24 3v18l-7 3z" fill="#29a3ee"/><path d="M17 0v6L3 18l-3-2V15zM17 24v-6L3 6 0 8v1z" fill="#0a75bf"/></svg></div>
      <div class="app"><svg width="24" height="24"><path d="M2 8l3-3 2 1V3l3-1 1 3h2l1-3 3 1v3l2-1 3 3-1 3v5q-2 7-9 7t-9-7v-5z" fill="#478cbf"/><circle cx="7.500" cy="13" r="2.500" fill="#fff"/><circle cx="16.500" cy="13" r="2.500" fill="#fff"/><circle cx="7.500" cy="13" r="1.200" fill="#333"/><circle cx="16.500" cy="13" r="1.200" fill="#333"/><path d="M1 16l5 1v2h4v-2h4v2h4v-2l5-1M12 12v3" fill="none" stroke="#dfe9f0" stroke-width="1.200"/></svg></div>
      <div class="app run"><svg width="24" height="24"><circle cx="12" cy="12" r="12" fill="#1ed760"/><path d="M4.500 8.500q8-2.500 15.500 1.500M5.500 12.500q6.500-2 13 1.500M6 16q6-1.500 10.500 1.300" fill="none" stroke="#0b1c14" stroke-width="2" stroke-linecap="round"/></svg></div>
      <div class="app run"><svg width="24" height="24"><rect x="3" y="2" width="18" height="20" fill="#47bede"/><path d="M3 21h18v3H3z" fill="#b95a18"/><path d="M3 19.500h18V21H3z" fill="#eee"/><path d="M6 7.500h12M6 11.500h12M6 15.500h12" stroke="#0f6a8c" stroke-width="1.600"/><path d="M4.500 0v4M8.500 0v4M12 0v4M15.500 0v4M19.500 0v4" stroke="#b8ecf8" stroke-width="1.500"/></svg></div>
      <div class="app run"><svg width="28" height="24"><circle cx="19" cy="9" r="3" fill="#5059c9"/><rect x="15" y="9" width="9" height="10" rx="3" fill="#5059c9"/><circle cx="12.500" cy="4" r="3.700" fill="#7b83eb"/><path d="M6 9h14v7q0 8-7 8-6 0-7-6z" fill="#7b83eb"/><rect y="6" width="12" height="12" rx="1" fill="#4b53bc"/><text x="6" y="15.500" class="w" font-size="10" font-weight="700" text-anchor="middle">T</text><circle cx="23" cy="5" r="5" fill="#6bb700" stroke="#fff"/><path d="M20.500 5l2 2 3.500-3.500" fill="none" stroke="#fff" stroke-width="1.300"/></svg></div>
    </div>
    <div class="tray">
      <svg width="12" height="8"><path d="M1 6.500 6 1.500l5 5" fill="none" stroke="#fff" stroke-width="1.500"/></svg>
      <svg class="cloud" width="17" height="16"><path d="M4 11a3.500 3.500 0 0 1 0-6 5 5 0 0 1 9-1q3 1 3 4v3z" fill="#bdbdbd"/><circle cx="12" cy="10.500" r="4.500" fill="#4cc2ff"/><path d="M12 8v1.200M12 10v3" stroke="#123" stroke-width="1.300"/></svg>
      <svg class="mic" width="12" height="17"><g fill="none" stroke="#e39be8" stroke-width="1.200"><rect x="3.500" y=".6" width="5" height="10" rx="2.500"/><path d="M.8 7.500q0 5.500 5.200 5.500t5.200-5.500M6 13v3.500"/></g></svg>
      <span class="lang">ESP</span>
      <svg class="mon" width="17" height="17"><path d="M11 1.500H1.500v10h11V8M4 15.500h8M5.500 11.500v4M9.500 11.500v4M12 1h4v4.500h-4zM14 5.500V15" fill="none" stroke="#fff" stroke-width="1.200"/></svg>
      <svg class="vol" width="17" height="14"><path d="M.7 5v4H3l4 4V1L3 5zM9.500 4.500q2 2.500 0 5M11.700 2.700q3.500 4.300 0 8.600M14 1q4.500 6 0 12" fill="none" stroke="#fff" stroke-width="1.200"/></svg>
      <p class="clock">11:20 a. m.<br>15/05/2024</p>
      <svg class="bell" width="14" height="16"><path d="M0 12.500 2 10V6q0-5 5-5.500Q12 1 12 6v4l2 2.500zM5 13.500h4q-.5 2-2 2t-2-2z" fill="#eda4f2"/></svg>
    </div>
  </footer>
</div>
</body>
</html>
```
FILE: styles.css
```css
* { box-sizing: border-box; }
body { margin: 0; font-family: "Inter", sans-serif; }
p, ul, figure { margin: 0; padding: 0; }
button { border: 0; padding: 0; font: inherit; }
svg { display: block; flex: none; }
.defs { position: absolute; width: 0; height: 0; }
.desktop { width: 1920px; height: 1080px; display: flex; flex-direction: column; overflow: hidden; background: #000; }
.cv { width: 8px; height: 8px; }

/* browser tab strip */
.tabs, .urlbar, .taskbar { font-family: "Open Sans", sans-serif; }
.tabs { height: 40px; display: flex; align-items: center; color: #fff; font-size: 12px; }
.tab-search { width: 28px; height: 28px; margin: 0 6px; border-radius: 9px; background: #fff; display: flex; align-items: center; justify-content: center; }
.tab { height: 34px; margin-top: 6px; padding: 0 12px 6px 17px; display: flex; align-items: center; width: 238px; white-space: nowrap; }
.tab span { margin-left: 11px; }
.tab-on { width: 232px; padding-left: 11px; background: #fff; color: #1f1f1f; border-radius: 10px 10px 0 0; }
.tab .tx { margin-left: auto; }
.tt1 { letter-spacing: -.3px; }
.tt2 { letter-spacing: -.26px; }
.tab-bar { width: 2px; height: 16px; background: #fff; margin-left: 3px; }
.newtab { margin-left: 10px; }
.winctl { margin-left: auto; display: flex; gap: 36px; padding-right: 18px; }

/* address bar */
.urlbar { height: 47px; background: #fff; border-bottom: 1px solid #d5d5d5; border-radius: 9px 9px 0 0; display: flex; align-items: center; padding-left: 15px; }
.nav { margin-right: 22px; }
.omni { width: 1420px; height: 34px; margin-left: -3px; border-radius: 17px; background: #e1e1e1; display: flex; align-items: center; padding: 0 16px 0 5px; }
.site { width: 24px; height: 24px; border-radius: 50%; background: #fff; display: flex; align-items: center; justify-content: center; }
.url { margin-left: 8px; font-size: 14px; line-height: 18px; padding-bottom: 1px; letter-spacing: -.2px; color: #5f5f5f; white-space: nowrap; }
.url b { font-weight: 400; color: #1f1f1f; }
.star { margin-left: auto; }
.tp { margin-left: 18px; width: 16px; font: 900 14px/18px "Inter", sans-serif; letter-spacing: -1.500px; color: #fa3c3c; }
.tp b { font-weight: 900; }
.puzzle { margin-left: 20px; }
.sep { width: 2px; height: 16px; margin-left: 16px; background: #000; }
.profile { width: 20px; height: 20px; margin-left: 16px; border-radius: 50%; background: #7e57c2; color: #fff; font-size: 11px; line-height: 20px; text-align: center; }
.update { width: 236px; height: 34px; margin-left: 12px; border-radius: 17px; background: #000; color: #fff; display: flex; align-items: center; padding: 0 14px 0 12px; justify-content: space-between; font-size: 12px; letter-spacing: -.3px; white-space: nowrap; }

/* editor toolbar */
.toolbar { height: 48px; background: #2c2c2c; border-bottom: 1px solid #444; display: flex; color: #fff; }
.tool { width: 48px; display: flex; align-items: center; justify-content: space-between; padding: 0 6px 0 12px; }
.tool.menu { width: 52px; padding: 0 13px 0 14px; }
.tool.on { background: #0c8ce9; padding-left: 15px; padding-right: 5px; margin-right: 1px; }
.tool.solo { width: 40px; padding: 0 2px 0 0; justify-content: center; }
.crumb { display: flex; align-items: center; margin-left: 433px; font-size: 14px; white-space: nowrap; }
.team { color: #b3b3b3; width: 94px; }
.file { margin-left: 6px; width: 61px; font-weight: 500; }
.free { width: 34px; height: 16px; border-radius: 3px; background: #394360; color: #7cc4f8; font: 500 11px/16px "Inter"; text-align: center; margin-right: 13px; }
.actions { margin-left: auto; display: flex; align-items: center; padding-right: 16px; }
.who { width: 50px; height: 32px; border-radius: 16px; background: #383838; display: flex; align-items: center; padding: 0 7px 0 4px; justify-content: space-between; }
.who span { width: 24px; height: 24px; border-radius: 50%; background: #f24822; font-size: 12px; font-weight: 500; line-height: 24px; text-align: center; }
.share { width: 54px; height: 32px; margin: 0 8px; border-radius: 6px; background: #0c8ce9; color: #fff; font-size: 11px; font-weight: 600; }
.devmode { width: 48px; height: 32px; border-radius: 16px; background: #444; padding: 4px; }
.devmode span { width: 24px; height: 24px; border-radius: 50%; background: #2c2c2c; display: flex; align-items: center; justify-content: center; }
.present { margin: 0 5px 0 24px; }
.zoom { margin: 0 5px 0 17px; width: 23px; font-size: 11px; font-weight: 500; }

.work { height: 897px; display: grid; grid-template-columns: 241px 1438px 241px; background: #2c2c2c; color: #fff; font-size: 11px; }

/* layers panel */
.left { border-right: 1px solid #444; overflow: hidden; min-height: 0; height: 897px; white-space: nowrap; }
.ltabs { height: 41px; border-bottom: 1px solid #444; display: flex; align-items: center; padding: 0 16px 0 18px; }
.ltabs b, .ptitle b { font-weight: 600; }
.ltabs b { margin-left: 10px; width: 51px; }
.assets { color: #b3b3b3; width: 67px; font-weight: 500; }
.pg { width: 58px; font-weight: 500; letter-spacing: -.1px; }
.up { transform: scaleY(-1); opacity: .6; }
.pages { height: 192px; border-bottom: 1px solid #444; padding: 4px 16px 0; }
.ptitle { height: 32px; display: flex; align-items: center; justify-content: space-between; padding-right: 2px; }
.page { height: 32px; display: flex; align-items: center; padding-left: 2px; font-weight: 500; letter-spacing: -.06px; }
.page svg { width: 9px; }
.page span { margin-left: 13px; }
.page span:first-child { margin-left: 22px; }
.quota { height: 64px; margin-top: 8px; border-radius: 4px; background: #383838; overflow: hidden; font-weight: 450; line-height: 16px; }
.quota i { display: block; height: 4px; background: linear-gradient(90deg, #0c8ce9 137px, #444 137px); }
.quota p { padding: 12px 16px 0; }
.quota a { padding-left: 16px; color: #66b8f5; }
.layers { list-style: none; }
.layers li { position: relative; height: 32px; display: flex; align-items: center; padding-left: 18px; color: #f2f2f2; letter-spacing: .06px; }
.layers .top { font-weight: 600; color: #fff; }
.layers svg { width: 12px; height: 12px; margin-right: 10px; color: #8a8a8a; }
.layers .in1 { padding-left: 42px; }
.layers .in2 { padding-left: 66px; }
.layers .clip { position: absolute; left: 44px; top: -24px; width: 12px; height: 42px; }

/* canvas */
.canvas { position: relative; overflow: hidden; background: #f5f5f5; height: 897px; }
.note { position: absolute; width: 100px; text-align: center; font: 600 11.400px/16px "Inter"; color: #000; }
.n1 { left: 246px; top: 87px; }
.n2 { left: 123px; top: 623px; }
.fr { position: absolute; background: #fff; }
.fr figcaption { position: absolute; left: 0; bottom: 100%; height: 16px; font-size: 11px; line-height: 17px; letter-spacing: .12px; color: #b8b8b8; white-space: nowrap; }
.fr svg { width: 100%; height: 100%; }
text { dominant-baseline: central; fill: #222; text-rendering: geometricPrecision; }
.taskbar text { dominant-baseline: auto; }
.fr svg text, .defs text { font-family: "Inter", sans-serif; }
.b { font-weight: 600; }
.c { text-anchor: middle; }
.g, .g text { fill: #8c8c8c; }
.m { fill: #666; }
.lt { fill: #888; font-weight: 300; }
.l { fill: #aaa; }
text.w { fill: #fff; }
.r { fill: #f00; }
.ok { fill: #2a9a4a; }
.ln { fill: none; stroke: #999; stroke-width: 2; }
.chip { fill: #cbcbcb; }
.mod { left: 342px; top: 83px; width: 42px; height: 37px; }
.f2 { left: 375px; top: 134px; width: 22px; height: 16px; }
.f1 { left: 405px; top: 37px; width: 239px; height: 151px; }
.f4 { left: 420px; top: 213px; width: 160px; height: 181px; }
.f5 { left: 587px; top: 213px; width: 160px; height: 181px; }
.f23 { left: 556px; top: 408px; width: 240px; height: 144px; }
.f12 { left: 316px; top: 564px; width: 240px; height: 144px; }
.f14 { left: 564px; top: 564px; width: 240px; height: 144px; }
.f15 { left: 811px; top: 564px; width: 240px; height: 144px; }
.f22 { left: 1055px; top: 564px; width: 240px; height: 144px; }
.doc { left: 218px; top: 623px; width: 42px; height: 39px; }
.f27 { left: 334px; top: 721px; width: 105px; height: 111px; }
.f28 { left: 442px; top: 722px; width: 105px; height: 77px; }
.f16 { left: 811px; top: 714px; width: 105px; height: 111px; }
.f17 { left: 919px; top: 715px; width: 105px; height: 76px; }
.f20 { left: 562px; top: 717px; width: 105px; height: 46px; }
.f29 { left: 565px; top: 777px; width: 115px; height: 120px; }
.f19 { left: 1075px; top: 725px; width: 115px; height: 140px; }
.f26 { left: 697px; top: 730px; width: 60px; height: 61px; }
.vthumb { position: absolute; left: 1427px; top: 5px; width: 6px; height: 310px; border-radius: 3px; background: #a8a8a8; }
.hthumb { position: absolute; left: 5px; top: 886px; width: 1214px; height: 6px; border-radius: 3px; background: rgba(120, 120, 120, .65); }

/* design panel */
.right { border-left: 1px solid #444; display: flex; flex-direction: column; white-space: nowrap; }
.rtabs { height: 41px; border-bottom: 1px solid #444; display: flex; align-items: center; padding-left: 16px; gap: 16px; font-weight: 500; }
.rtabs b { font-weight: 600; }
.rtabs span { color: #b3b3b3; }
.rpage { height: 81px; border-bottom: 1px solid #444; padding: 16px 17px 0 16px; line-height: 16px; }
.rpage b { font-weight: 600; }
.color { display: flex; align-items: center; margin-top: 16px; height: 16px; font-weight: 500; letter-spacing: -.1px; }
.color i { width: 16px; height: 16px; background: #f5f5f5; border-radius: 1px; margin-right: 8px; }
.hex { width: 73px; }
.color svg { margin-left: auto; }
.rrow { height: 49px; border-bottom: 1px solid #444; display: flex; align-items: center; justify-content: space-between; padding: 0 18px 0 16px; color: #b3b3b3; font-weight: 600; }
.help { width: 32px; height: 32px; border-radius: 50%; background: #1e1e1e; margin: auto 16px 16px auto; display: flex; align-items: center; justify-content: center; }

/* taskbar */
.taskbar { height: 48px; border-top: 1px solid #45494f; background: linear-gradient(90deg, #20282e 0, #1e242c 300px, #17233d 460px, #112349 640px, #10224c 950px, #14223f 1180px, #1c2430 1400px, #1e2830 1600px, #1f2932 100%); display: flex; align-items: center; color: #fff; font-size: 12px; line-height: 16px; position: relative; }
.weather { width: 573px; display: flex; padding-left: 20px; align-items: center; letter-spacing: -.3px; }
.weather svg { margin-top: -4px; }
.weather p { margin: -1px 0 0 3px; }
.weather span { color: #c4c8cc; }
.apps { display: flex; align-items: center; }
.search { width: 220px; height: 32px; margin: 0 2px 0 12px; border-radius: 16px; border: 1px solid #4a5468; background: #333e56; display: flex; align-items: center; padding: 0 4px 0 11px; color: #d8dbe2; font-size: 14px; }
.search span { margin: -1px 0 0 9px; letter-spacing: -.5px; }
.hands { margin-left: auto; }
.app { width: 44px; height: 40px; display: flex; align-items: center; padding-left: 10px; position: relative; }
.app svg { overflow: visible; }
.run::after { content: ""; position: absolute; left: 19px; bottom: 0; width: 6px; height: 3px; border-radius: 2px; background: #9aa0ae; }
.cur::before { content: ""; position: absolute; left: 2px; top: 0; width: 39px; height: 40px; border-radius: 4px; border: 1px solid #2f3c5a; background: #232f4c; }
.cur svg { position: relative; }
.cur::after { left: 14px; width: 16px; background: #dd5ee0; }
.tray { margin-left: auto; display: flex; align-items: center; padding-right: 20px; }
.cloud { margin-left: 17px; }
.mic { margin-left: 18px; }
.lang { margin-left: 22px; width: 21px; letter-spacing: -.3px; }
.mon { margin-left: 19px; }
.vol { margin-left: 7px; }
.clock { width: 64px; margin: -1px 0 0 14px; text-align: right; letter-spacing: -.4px; white-space: nowrap; }
.bell { margin-left: 10px; }
```
